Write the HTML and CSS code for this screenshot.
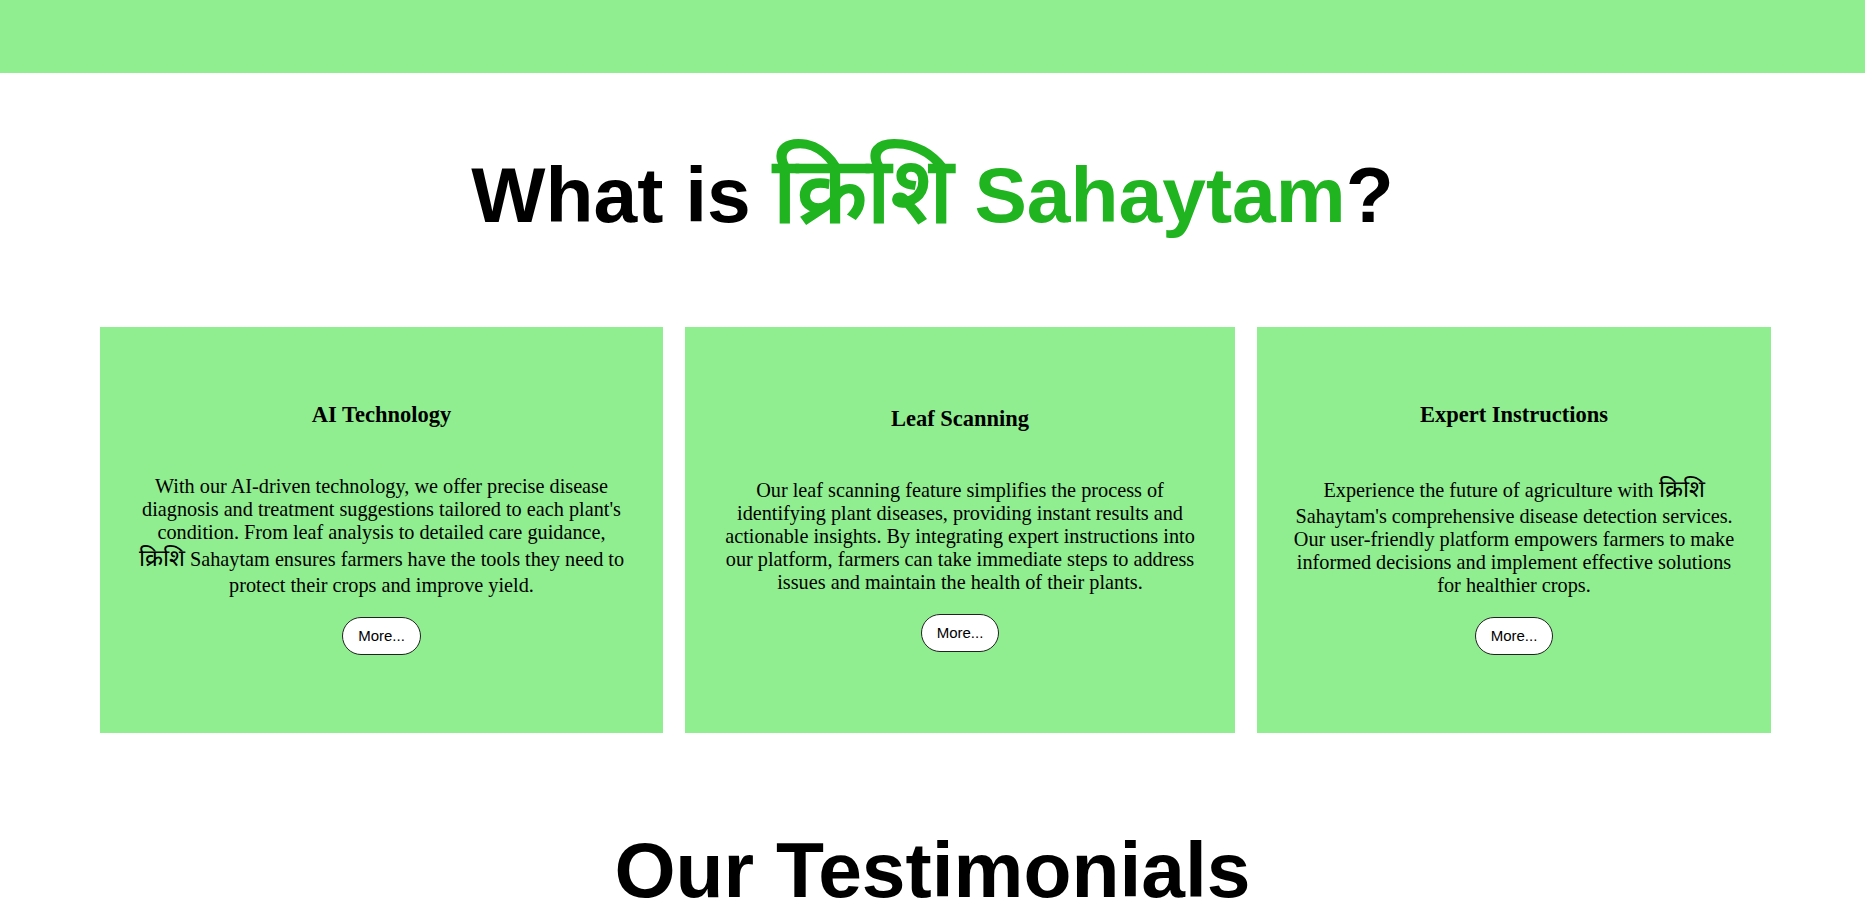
FILE: index.html
```html
<!DOCTYPE html>
<html lang="en">
<head>
<meta charset="utf-8">
<title>क्रिशि Sahaytam</title>
<link rel="stylesheet" href="styles.css">
</head>
<body>
<header class="topbar"></header>
<main>
  <section class="about">
    <h1 class="section-title">What is <span class="brand"><span class="deva">क्रिशि</span> Sahaytam</span>?</h1>
    <div class="cards">
      <article class="card">
        <h3 class="card-title">AI Technology</h3>
        <p class="card-text">With our AI-driven technology, we offer precise disease diagnosis and treatment suggestions tailored to each plant's condition. From leaf analysis to detailed care guidance, <span class="deva">क्रिशि</span> Sahaytam ensures farmers have the tools they need to protect their crops and improve yield.</p>
        <button class="more-btn" type="button">More...</button>
      </article>
      <article class="card">
        <h3 class="card-title">Leaf Scanning</h3>
        <p class="card-text">Our leaf scanning feature simplifies the process of identifying plant diseases, providing instant results and actionable insights. By integrating expert instructions into our platform, farmers can take immediate steps to address issues and maintain the health of their plants.</p>
        <button class="more-btn" type="button">More...</button>
      </article>
      <article class="card">
        <h3 class="card-title">Expert Instructions</h3>
        <p class="card-text">Experience the future of agriculture with <span class="deva">क्रिशि</span> Sahaytam's comprehensive disease detection services. Our user-friendly platform empowers farmers to make informed decisions and implement effective solutions for healthier crops.</p>
        <button class="more-btn" type="button">More...</button>
      </article>
    </div>
  </section>
  <section class="testimonials">
    <h1 class="section-title testimonials-title">Our Testimonials</h1>
  </section>
</main>
</body>
</html>
```

FILE: styles.css
```css
html, body {
  margin: 0;
  padding: 0;
  background: #ffffff;
  color: #000000;
  font-family: "Liberation Serif", "Times New Roman", serif;
}

.topbar {
  height: 73px;
  background: #90ee90;
}

.section-title {
  font-family: "Liberation Sans", Arial, sans-serif;
  font-weight: bold;
  font-size: 78.6px;
  line-height: 92px;
  text-align: center;
  margin: 76px 0 86px;
}

.brand {
  color: #20b420;
}

.deva {
  font-size: 1.16em;
}

.section-title .deva {
  line-height: 0;
}

.card-text .deva {
  line-height: 1.25;
}

.cards {
  display: grid;
  grid-template-columns: 563px 550px 514px;
  column-gap: 22px;
  margin: 0 94px 0 100px;
}

.card {
  box-sizing: border-box;
  height: 406px;
  background: #90ee90;
  padding: 0 35px 3px;
  display: flex;
  flex-direction: column;
  justify-content: center;
  align-items: center;
  text-align: center;
}

.card-title {
  font-size: 22.5px;
  font-weight: bold;
  margin: 0 0 47px;
}

.card-text {
  font-size: 20.25px;
  margin: 0 0 20px;
}

.more-btn {
  font-family: "Liberation Sans", Arial, sans-serif;
  font-size: 15px;
  line-height: 16px;
  padding: 10px 15px;
  background: #ffffff;
  color: #000000;
  border: 1px solid #222222;
  border-radius: 20px;
  cursor: pointer;
}

.testimonials-title {
  margin: 91px 0 40px;
}
```
